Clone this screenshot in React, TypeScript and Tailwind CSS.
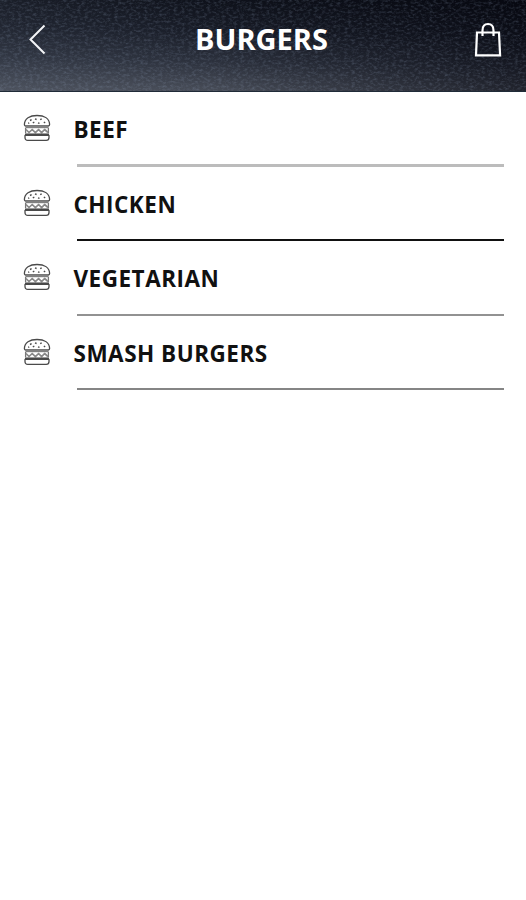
const FONT = "font-['Open_Sans','Noto_Sans',sans-serif]";

function BurgerIcon() {
  return (
    <svg width="28" height="28" viewBox="0 0 28 28" fill="none" stroke="#4a4a4a" strokeWidth="1.3" strokeLinejoin="round">
      <path d="M1.4 10.6C1.4 4.400 6.800 1.500 14 1.500s12.600 2.900 12.600 9.100c0 .9-.6 1.400-1.400 1.400H2.800c-.8 0-1.400-.5-1.400-1.400Z" />
      <path d="M7 6.500l1.600-.8M12 4.800l1.600.7M17.200 5.600l1.500-.7M20.800 8l1.400.8M9.800 8.900l1.500-.7M15 8.800l1.500.5M5.200 9.300l1-.5" strokeWidth="1.4" />
      <path d="M2.400 13h23.200" strokeWidth="2.400" stroke="#808080" />
      <path d="M2.600 14v5M25.400 14v5" stroke="#777" />
      <path d="M3 15.500l3 3 3.200-3 3.200 3.200 3.200-3.200 3 3.200 3-3.200 3.400 3" stroke="#888" strokeWidth="1.700" />
      <path d="M2 20.600h24" strokeWidth="2.300" />
      <path d="M2 21.400h24v2.100c0 1.800-1 2.900-2.800 2.900H4.800C3 26.400 2 25.300 2 23.500Z" />
    </svg>
  );
}

const ITEMS = [
  { label: 'BEEF', line: 'h-[3px] bg-[#bcbcbc]' },
  { label: 'CHICKEN', line: 'h-[2px] bg-[#111111]' },
  { label: 'VEGETARIAN', line: 'h-[2px] bg-[#929292]' },
  { label: 'SMASH BURGERS', line: 'h-[2px] bg-[#858585]' },
];

export default function App() {
  return (
    <div className={`flex h-[900px] w-[526px] flex-col overflow-hidden bg-white ${FONT}`}>
      <header className="relative h-[92px] shrink-0 overflow-hidden bg-[linear-gradient(181deg,#0d1019_0%,#181c27_35%,#2b303c_65%,#4a4f5a_98%)]">
        <div className="absolute inset-0 bg-[linear-gradient(90deg,rgba(90,100,115,0.15)_0%,transparent_40%,rgba(0,0,8,0.5)_100%)]" />
        <svg className="absolute inset-0" width="526" height="92">
          <filter id="leather" x="0" y="0" width="100%" height="100%" colorInterpolationFilters="sRGB">
            <feTurbulence type="fractalNoise" baseFrequency="0.27 0.43" numOctaves="3" seed="8" />
            <feColorMatrix values="0 0 0 0 0.6  0 0 0 0 0.67  0 0 0 0 0.78  1.4 0 0 0 -0.6" />
          </filter>
          <rect width="526" height="92" filter="url(#leather)" opacity="0.36" />
          <path d="M0 91.500h526" stroke="#202b38" />
        </svg>
        <div className="relative flex h-[79px] items-center justify-between pl-[28px] pr-[24px]">
          <svg width="20" height="32" viewBox="0 0 20 32" fill="none" stroke="#f4f5f7" strokeWidth="2">
            <path d="M16.500 1.500 2.500 15.500 16.500 29.500" />
          </svg>
          <h1 className="mb-[2px] ml-[1px] text-[29px] font-bold leading-[40px] text-white">BURGERS</h1>
          <svg width="28" height="36" viewBox="0 0 28 36" fill="none" stroke="#fff" strokeWidth="2.200">
            <path d="M3 10.500h22l1.100 22.800H2Z" />
            <path d="M8.500 14V8.500c0-4 2-6.500 5.500-6.500s5.500 2.500 5.500 6.500v5.500" />
          </svg>
        </div>
      </header>
      <main>
        {ITEMS.map((item) => (
          <section key={item.label} className="flex h-[74.600px] flex-col justify-end">
            <div className="flex min-h-0 flex-1 items-center pl-[23px]">
              <BurgerIcon />
              <span className="ml-[22.500px] mt-[4px] whitespace-nowrap text-[22.500px] font-bold leading-[30px] tracking-[0.500px] text-[#111]">
                {item.label}
              </span>
            </div>
            <div className={`ml-[77px] mr-[22px] shrink-0 ${item.line}`} />
          </section>
        ))}
      </main>
    </div>
  );
}
